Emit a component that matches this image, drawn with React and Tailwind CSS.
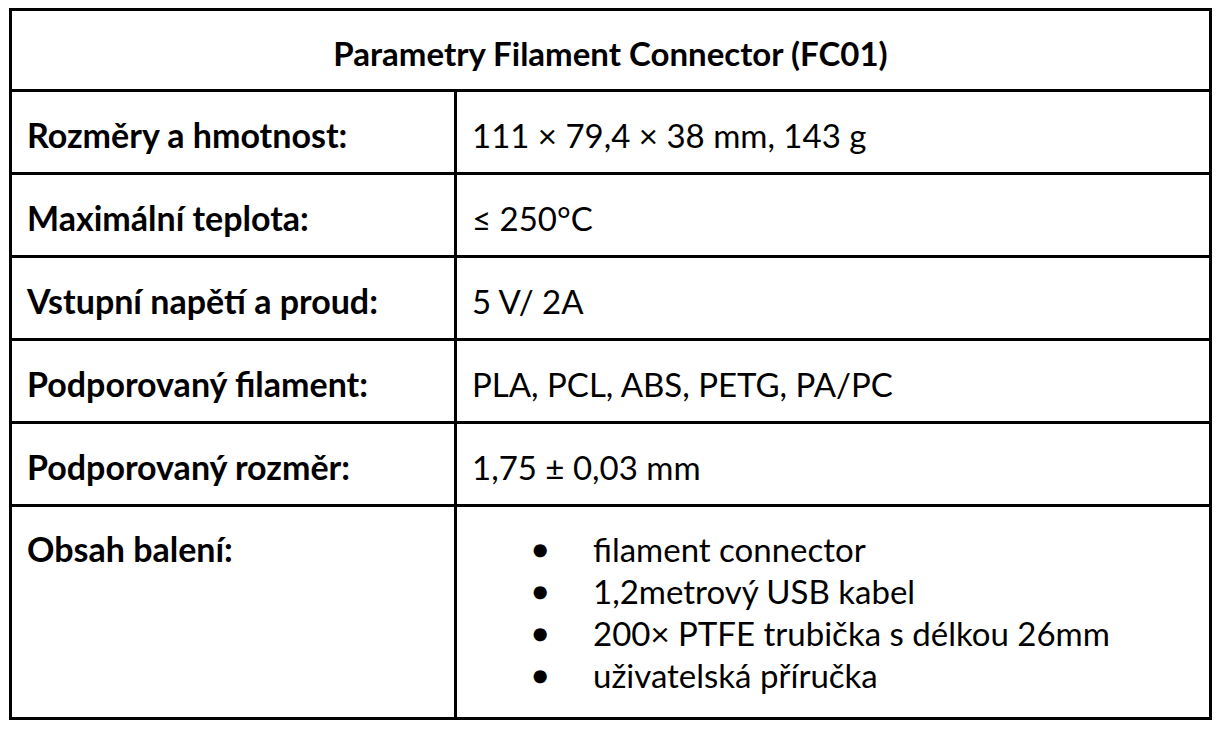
import React from "react";

const rows = [
  { label: "Rozměry a hmotnost:", value: "111 × 79,4 × 38 mm, 143 g" },
  { label: "Maximální teplota:", value: "≤ 250°C" },
  { label: "Vstupní napětí a proud:", value: "5 V/ 2A" },
  { label: "Podporovaný filament:", value: "PLA, PCL, ABS, PETG, PA/PC" },
  { label: "Podporovaný rozměr:", value: "1,75 ± 0,03 mm" },
];

const contents = [
  "filament connector",
  "1,2metrový USB kabel",
  "200× PTFE trubička s délkou 26mm",
  "uživatelská příručka",
];

export default function App() {
  return (
    <div className="min-h-[731px] bg-white pt-[8px] pl-[9px] font-['Lato',sans-serif] text-black">
      <table className="w-[1203px] table-fixed border-collapse">
        <colgroup>
          <col className="w-[445px]" />
          <col />
        </colgroup>
        <tbody>
          <tr className="h-[81px]">
            <td
              colSpan={2}
              className="border-[3px] border-black pt-[6px] text-center align-middle text-[33px] font-bold leading-[42px]"
            >
              Parametry Filament Connector (FC01)
            </td>
          </tr>
          {rows.map((row) => (
            <tr key={row.label} className="h-[83px]">
              <td className="border-[3px] border-black px-[15px] pt-[5px] align-middle text-[34px] font-bold leading-[42px]">
                {row.label}
              </td>
              <td className="border-[3px] border-black px-[15px] pt-[5px] align-middle text-[33px] leading-[42px]">
                {row.value}
              </td>
            </tr>
          ))}
          <tr className="h-[213px]">
            <td className="border-[3px] border-black px-[15px] pt-[21px] align-top text-[34px] font-bold leading-[42px]">
              Obsah balení:
            </td>
            <td className="border-[3px] border-black px-[15px] pt-[21px] align-top text-[33px] leading-[42px]">
              <ul>
                {contents.map((item) => (
                  <li key={item} className="flex">
                    <span className="ml-[60px] w-[61px] shrink-0 text-[27px]">●</span>
                    <span>{item}</span>
                  </li>
                ))}
              </ul>
            </td>
          </tr>
        </tbody>
      </table>
    </div>
  );
}
